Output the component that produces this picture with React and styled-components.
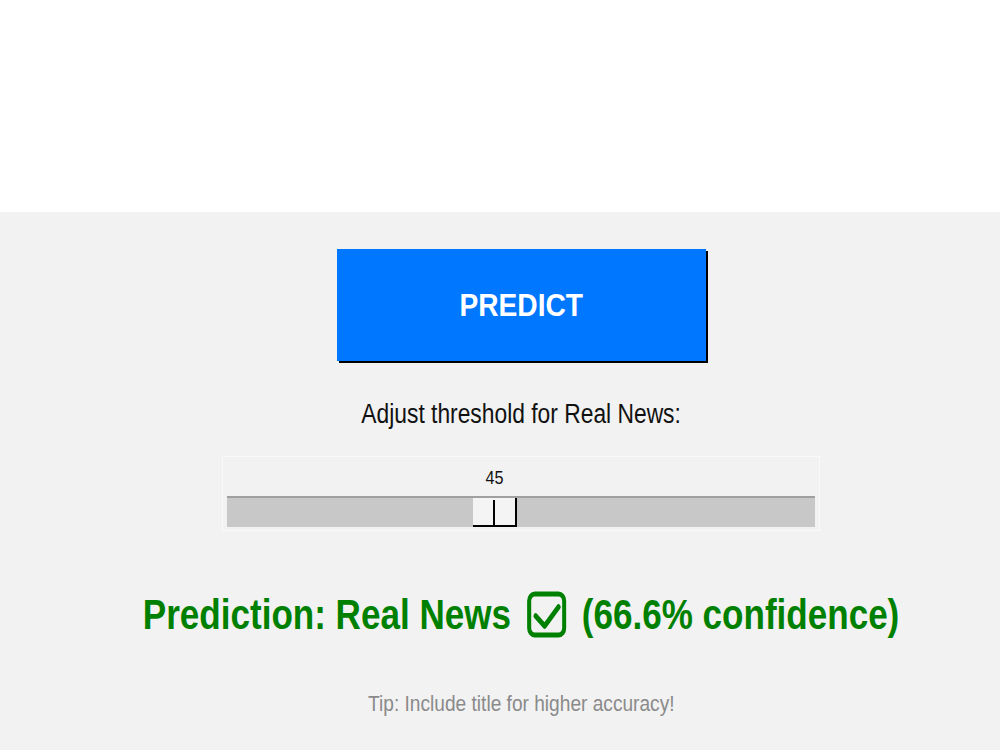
import React from 'react';
import styled, { createGlobalStyle } from 'styled-components';

const GlobalStyle = createGlobalStyle`
    html, body {
        margin: 0;
        padding: 0;
        background: #ffffff;
        font-family: "Liberation Sans", Arial, sans-serif;
    }
`;

const Page = styled.div`
    width: 1000px;
    height: 750px;
    display: flex;
    flex-direction: column;
`;

const TopArea = styled.div`
    height: 212px;
    background: #ffffff;
`;

const Panel = styled.div`
    flex: 1;
    background: #f2f2f2;
    display: flex;
    flex-direction: column;
    align-items: center;
    padding-top: 37px;
    padding-left: 42px;
`;

const PredictButton = styled.button`
    width: 369px;
    height: 112px;
    border: none;
    background: #0077ff;
    box-shadow: 2px 2px 0 #000000;
    color: #ffffff;
    font-family: "Liberation Sans", Arial, sans-serif;
    font-weight: bold;
    font-size: 32px;
    cursor: pointer;
    padding: 0;
`;

// text in this window is drawn a bit condensed
const Narrow = styled.span`
    display: inline-flex;
    align-items: center;
    transform: scaleX(${(p) => p.$squeeze || 0.85});
    white-space: nowrap;
`;

const Label = styled.div`
    margin-top: 38px;
    font-size: 27px;
    color: #111111;
    line-height: 30px;
`;

const ScaleBox = styled.div`
    margin-top: 27px;
    width: 598px;
    height: 75px;
    border: 1px solid #f9f9f9;
    box-sizing: border-box;
    display: flex;
    flex-direction: column;
    align-items: center;
    padding: 0 4px;
`;

const ScaleValue = styled.div`
    height: 39px;
    display: flex;
    align-items: center;
    justify-content: center;
    font-size: 19px;
    color: #111111;
    margin-left: -52px;
    padding-top: 2px;
    box-sizing: border-box;
`;

const Trough = styled.div`
    position: relative;
    width: 100%;
    height: 31px;
    background: #c8c8c8;
    border-top: 2px solid #a0a0a0;
    box-sizing: border-box;
`;

const Thumb = styled.div`
    position: absolute;
    top: 0;
    width: 44px;
    height: 29px;
    background: #f4f4f4;
    border-right: 2px solid #000000;
    border-bottom: 2px solid #000000;
    box-sizing: border-box;

    &::after {
        content: '';
        position: absolute;
        left: 20px;
        top: 2px;
        bottom: 0;
        width: 2px;
        background: #000000;
    }
`;

const Result = styled.div`
    margin-top: 58px;
    color: #008000;
    font-weight: bold;
    font-size: 43px;
    line-height: 50px;
    display: flex;
    justify-content: center;
    width: 100%;
`;

const ResultIcon = styled.svg`
    margin: 0 19px;
`;

const Tip = styled.div`
    margin-top: 52px;
    color: #8a8a8a;
    font-size: 22.5px;
`;

const CheckIcon = () => (
    <ResultIcon width="49" height="47" viewBox="0 0 49 47">
        <rect x="3" y="3" width="43" height="41" rx="7" fill="none" stroke="#008000" strokeWidth="5" />
        <path d="M11 25 L22 35 L39 16" fill="none" stroke="#008000" strokeWidth="5.5" strokeLinecap="round" strokeLinejoin="round" />
    </ResultIcon>
);

const App = () => {
    const threshold = 45;
    const trackWidth = 590;
    const thumbLeft = Math.round(trackWidth * 0.417);

    return (
        <>
            <GlobalStyle />
            <Page>
                <TopArea />
                <Panel>
                    <PredictButton><Narrow $squeeze={0.88}>PREDICT</Narrow></PredictButton>
                    <Label><Narrow $squeeze={0.845}>Adjust threshold for Real News:</Narrow></Label>
                    <ScaleBox>
                        <ScaleValue><Narrow>{threshold}</Narrow></ScaleValue>
                        <Trough>
                            <Thumb style={{ left: thumbLeft }} />
                        </Trough>
                    </ScaleBox>
                    <Result>
                        <Narrow $squeeze={0.815}>
                            Prediction: Real News
                            <CheckIcon />
                            (66.6% confidence)
                        </Narrow>
                    </Result>
                    <Tip><Narrow>Tip: Include title for higher accuracy!</Narrow></Tip>
                </Panel>
            </Page>
        </>
    );
};

export default App;
